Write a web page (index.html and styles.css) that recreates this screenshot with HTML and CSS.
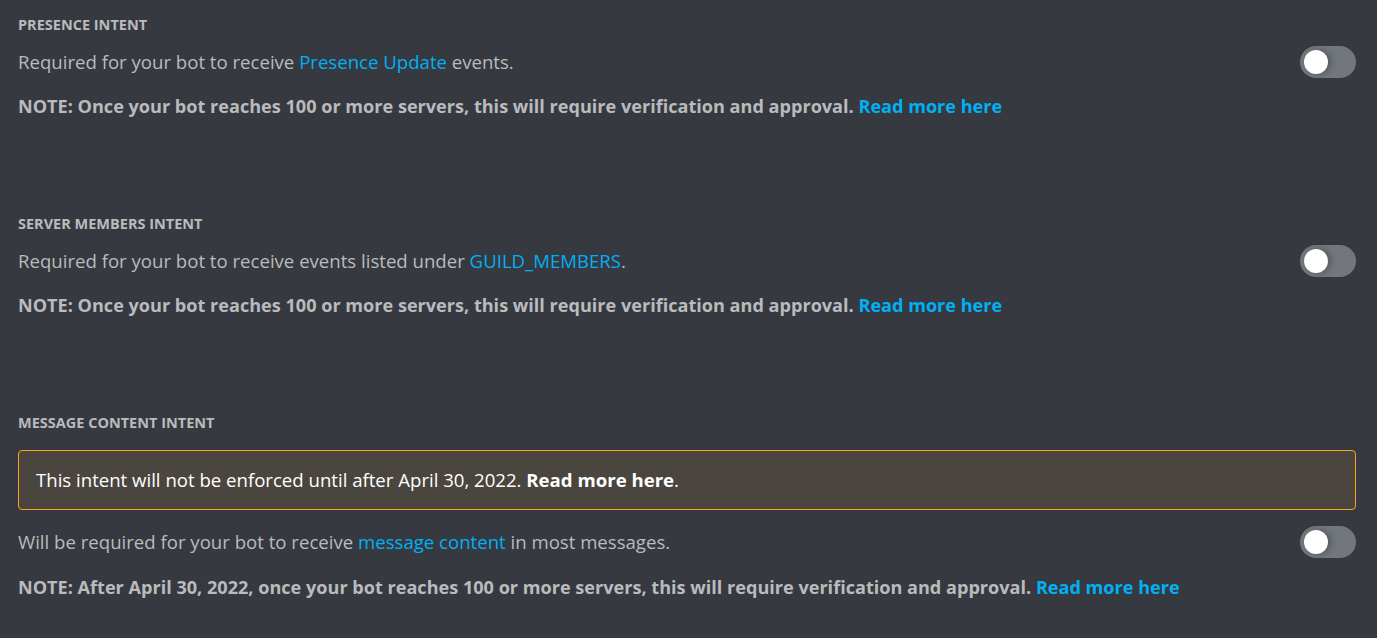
FILE: index.html
```html
<!DOCTYPE html>
<html>
<head>
<meta charset="utf-8">
<link rel="stylesheet" href="styles.css">
</head>
<body>
<div class="page">
  <section class="intent">
    <h3 class="intent-title">Presence Intent</h3>
    <div class="intent-row">
      <p class="intent-desc">Required for your bot to receive <a class="link" href="#">Presence Update</a> events.</p>
      <div class="toggle"><span class="knob"></span></div>
    </div>
    <p class="intent-note">NOTE: Once your bot reaches 100 or more servers, this will require verification and approval. <a class="link" href="#">Read more here</a></p>
  </section>

  <section class="intent">
    <h3 class="intent-title">Server Members Intent</h3>
    <div class="intent-row">
      <p class="intent-desc">Required for your bot to receive events listed under <a class="link" href="#">GUILD_MEMBERS</a>.</p>
      <div class="toggle"><span class="knob"></span></div>
    </div>
    <p class="intent-note">NOTE: Once your bot reaches 100 or more servers, this will require verification and approval. <a class="link" href="#">Read more here</a></p>
  </section>

  <section class="intent">
    <h3 class="intent-title">Message Content Intent</h3>
    <div class="warning"><p class="warning-text">This intent will not be enforced until after April 30, 2022. <a class="warning-link" href="#">Read more here</a>.</p></div>
    <div class="intent-row intent-row-after-warning">
      <p class="intent-desc">Will be required for your bot to receive <a class="link" href="#">message content</a> in most messages.</p>
      <div class="toggle"><span class="knob"></span></div>
    </div>
    <p class="intent-note intent-note-last">NOTE: After April 30, 2022, once your bot reaches 100 or more servers, this will require verification and approval. <a class="link" href="#">Read more here</a></p>
  </section>
</div>
</body>
</html>
```

FILE: styles.css
```css
html, body {
  margin: 0;
  padding: 0;
  background: #36393f;
}

body {
  font-family: "Open Sans", "Noto Sans", sans-serif;
  color: #b9bbbe;
}

.page {
  padding: 15px 21px 0 18px;
  display: flex;
  flex-direction: column;
  gap: 96px;
}

.intent {
  display: flex;
  flex-direction: column;
}

.intent-title {
  margin: 0;
  font-size: 14.5px;
  line-height: 20px;
  font-weight: 700;
  text-transform: uppercase;
  color: #b9bbbe;
}

.intent-row {
  display: flex;
  align-items: center;
  justify-content: space-between;
  margin-top: 11px;
}

.intent-row-after-warning {
  margin-top: 16px;
}

.intent-desc {
  margin: 0;
  font-size: 18.6px;
  line-height: 24px;
  color: #b9bbbe;
}

.link {
  color: #00b0f4;
  text-decoration: none;
}

.intent-note {
  margin: 16px 0 0;
  font-size: 18.1px;
  line-height: 24px;
  font-weight: 700;
  color: #b9bbbe;
}

.intent-note-last {
  margin-top: 17px;
}

.toggle {
  width: 56px;
  height: 32px;
  border-radius: 16px;
  background: #72767d;
  box-sizing: border-box;
  padding: 4px;
  flex: none;
}

.knob {
  display: block;
  width: 24px;
  height: 24px;
  border-radius: 50%;
  background: #fff;
  box-shadow: 3px 0 6px rgba(0, 0, 0, 0.25);
}

.warning {
  margin-top: 17px;
  height: 60px;
  box-sizing: border-box;
  border: 1px solid #faa61a;
  border-radius: 4px;
  background: #4a453f;
  padding: 0 17px;
  display: flex;
  align-items: center;
}

.warning-text {
  margin: 0;
  font-size: 18.6px;
  line-height: 24px;
  color: #fff;
}

.warning-link {
  color: #fff;
  font-weight: 700;
  text-decoration: none;
}
```
